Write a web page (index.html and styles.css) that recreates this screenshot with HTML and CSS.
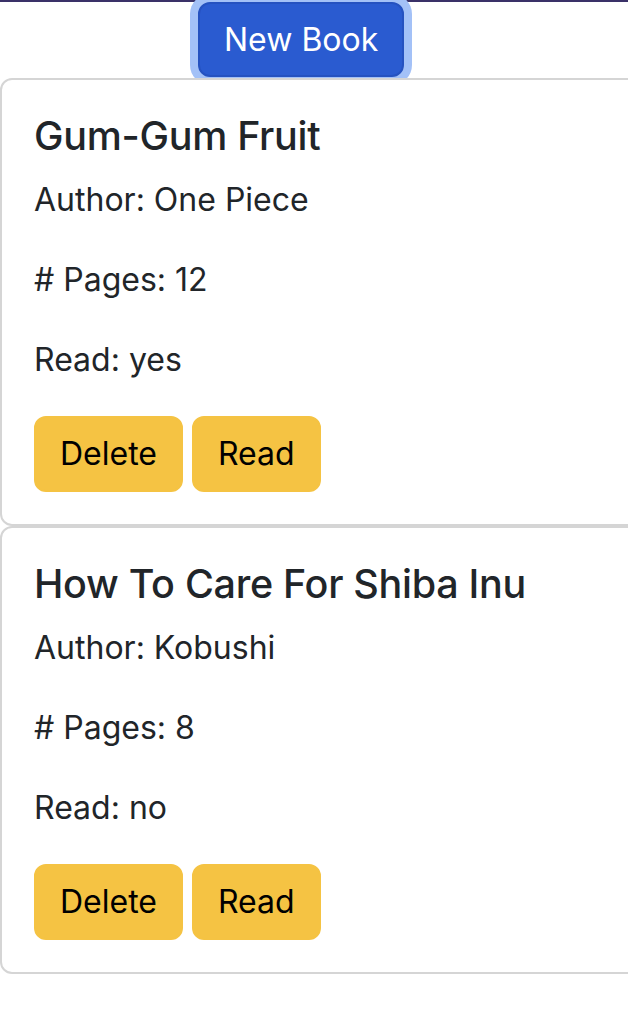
FILE: index.html
```html
<!DOCTYPE html>
<html lang="en">
<head>
<meta charset="utf-8">
<title>Library</title>
<link rel="stylesheet" href="styles.css">
</head>
<body>
<header class="topbar"></header>
<div class="actions">
  <button class="btn btn-primary focused">New Book</button>
</div>
<main class="books">
  <div class="card">
    <div class="card-body">
      <h5 class="card-title">Gum-Gum Fruit</h5>
      <p class="card-text">Author: One Piece</p>
      <p class="card-text"># Pages: 12</p>
      <p class="card-text">Read: yes</p>
      <div class="btn-row">
        <button class="btn btn-warning">Delete</button>
        <button class="btn btn-warning">Read</button>
      </div>
    </div>
  </div>
  <div class="card">
    <div class="card-body">
      <h5 class="card-title">How To Care For Shiba Inu</h5>
      <p class="card-text">Author: Kobushi</p>
      <p class="card-text"># Pages: 8</p>
      <p class="card-text">Read: no</p>
      <div class="btn-row">
        <button class="btn btn-warning">Delete</button>
        <button class="btn btn-warning">Read</button>
      </div>
    </div>
  </div>
</main>
</body>
</html>
```
FILE: styles.css
```css
html {
  overflow-x: hidden;
}
body {
  margin: 0;
  font-family: Inter, "Noto Sans", "Liberation Sans", sans-serif;
  font-size: 32px;
  line-height: 48px;
  color: #212529;
  background: #fff;
  width: 720px;
}
.topbar {
  height: 2px;
  background: #3a3168;
}
.actions {
  padding-left: 198px;
  height: 76px;
}
.btn {
  font-family: inherit;
  font-size: 32px;
  line-height: 48px;
  padding: 12px 24px;
  border-radius: 12px;
  border: 2px solid transparent;
  cursor: pointer;
}
.btn-primary {
  background: #2a5bd0;
  border-color: #2552c0;
  color: #fff;
  height: 75px;
  padding: 0 24px;
}
.btn-primary.focused {
  box-shadow: 0 0 0 8px #a3c1f7;
}
.btn-warning {
  background: #f5c343;
  border-color: #f5c343;
  color: #000;
}
.card {
  position: relative;
  background: #fff;
  border: 2px solid #d5d5d5;
  border-radius: 12px;
  width: 700px;
}
.card-body {
  padding: 32px;
}
.card-title {
  margin: 0 0 16px;
  font-size: 39.5px;
  line-height: 48px;
  font-weight: 500;
  letter-spacing: -0.3px;
}
.card-text {
  margin: 0 0 32px;
}
.btn-row {
  display: flex;
  gap: 9px;
}
```
